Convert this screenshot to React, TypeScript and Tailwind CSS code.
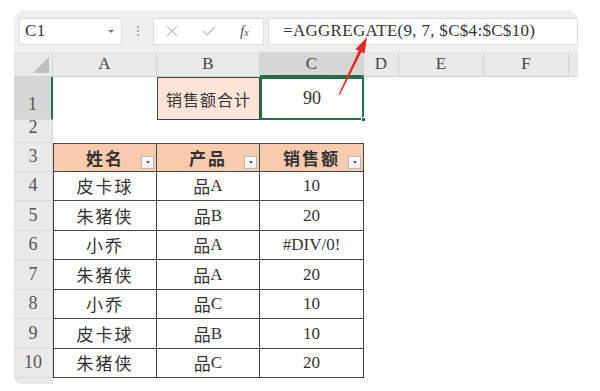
const serif = "font-['Liberation_Serif','Noto_Sans_CJK_SC',serif]";

const data = [
  ["皮卡球", "品A", "10"],
  ["朱猪侠", "品B", "20"],
  ["小乔", "品A", "#DIV/0!"],
  ["朱猪侠", "品A", "20"],
  ["小乔", "品C", "10"],
  ["皮卡球", "品B", "10"],
  ["朱猪侠", "品C", "20"],
];

const rowHeights = ["h-[29px]", "h-[30px]", "h-[29px]", "h-[30px]", "h-[29px]", "h-[30px]", "h-[29px]"];

function FilterBtn() {
  return (
    <div className="absolute right-[2px] bottom-[2px] w-[13px] h-[13px] bg-gradient-to-b from-white to-[#eeeeee] border border-[#b8b8b8] flex items-center justify-center">
      <div className="w-0 h-0 border-l-[2px] border-r-[2px] border-t-[3px] border-l-transparent border-r-transparent border-t-[#666]" />
    </div>
  );
}

function RowHead({ n, h, active }: { n: number; h: string; active?: boolean }) {
  return (
    <div
      className={`w-[39px] ${h} shrink-0 flex items-end justify-center pb-[1px] text-[18px] font-normal text-[#555] ${serif} border-r ${
        active ? "bg-[#d6d6d6] border-r-[2px] border-r-[#217346]" : "bg-[#e9e9e9] border-r-[#d4d4d4]"
      } border-b border-b-[#dadada]`}
    >
      {n}
    </div>
  );
}

export default function App() {
  return (
    <div className={`w-[600px] h-[391px] bg-white relative ${serif}`}>
      <div className="absolute left-[14px] top-[10px] w-[564px] rounded-t-[10px] rounded-bl-[8px] overflow-hidden bg-white">
        {/* toolbar */}
        <div className="h-[42px] bg-[#efefef] flex items-center pl-[5px]">
          <div className="w-[103px] h-[27px] bg-white border border-[#dcdcdc] flex items-center pl-[5px] pr-[7px] justify-between">
            <span className="text-[17px] text-[#333] tracking-[0.5px]">C1</span>
            <div className="w-0 h-0 border-l-[3px] border-r-[3px] border-t-[3px] border-l-transparent border-r-transparent border-t-[#777]" />
          </div>
          <div className="w-[31px] flex flex-col items-center gap-[2px]">
            <div className="w-[2px] h-[2px] bg-[#aaa]" />
            <div className="w-[2px] h-[2px] bg-[#aaa]" />
            <div className="w-[2px] h-[2px] bg-[#aaa]" />
          </div>
          <div className="w-[111px] h-[27px] bg-white border border-[#dcdcdc] flex items-center px-[11px] justify-between">
            <svg width="14" height="14" viewBox="0 0 14 14">
              <path d="M2 2 L12 12 M12 2 L2 12" stroke="#c4c4c4" strokeWidth="1.3" fill="none" />
            </svg>
            <svg width="16" height="14" viewBox="0 0 16 14">
              <path d="M2 7 L6 11 L14 3" stroke="#c4c4c4" strokeWidth="1.5" fill="none" />
            </svg>
            <span className="italic text-[15px] text-[#555] pr-[3px]">
              f<span className="text-[11px]">x</span>
            </span>
          </div>
          <div className="ml-[4px] flex-1 h-[27px] bg-white border border-[#dcdcdc] flex items-center pl-[14px]">
            <span className="text-[17px] text-[#333] tracking-[0.3px] whitespace-pre">=AGGREGATE(9, 7, $C$4:$C$10)</span>
          </div>
        </div>

        {/* column headers */}
        <div className="flex h-[25px] text-[17px] text-[#444]">
          <div className="w-[39px] bg-[#e9e9e9] border-r border-[#d4d4d4] border-b border-b-[#d0d0d0] flex items-end justify-end p-[3px]">
            <div className="w-0 h-0 border-l-[16px] border-b-[16px] border-l-transparent border-b-[#bdbdbd]" />
          </div>
          {[
            ["A", "w-[104px]"],
            ["B", "w-[103px]"],
            ["C", "w-[104px]"],
            ["D", "w-[35px]"],
            ["E", "w-[85px]"],
            ["F", "w-[85px]"],
            ["", "w-[9px]"],
          ].map(([l, w]) => (
            <div
              key={l + w}
              className={`${w} flex items-center justify-center border-r border-[#d4d4d4] border-b ${
                l === "C" ? "bg-[#d6d6d6] border-b-[#217346] border-b-[2px]" : "bg-[#e9e9e9] border-b-[#d0d0d0]"
              } ${l === "" ? "border-r-0" : ""}`}
            >
              {l}
            </div>
          ))}
        </div>

        {/* row 1 */}
        <div className="flex text-[17px] text-[#333]">
          <RowHead n={1} h="h-[43px]" active />
          <div className="w-[104px]" />
          <div className="w-[103px] h-[43px] bg-[#fce4d6] border border-[#444] flex items-center justify-center font-['Noto_Sans_CJK_SC',sans-serif] text-[16px] tracking-[1px]">
            销售额合计
          </div>
          <div className="w-[104px] h-[43px] border-[2px] border-[#217346] relative flex items-center justify-center text-[18px]">
            90
            <div className="absolute -right-[4px] -bottom-[4px] w-[5px] h-[5px] bg-[#217346] border border-white" />
          </div>
        </div>

        {/* row 2 */}
        <div className="flex">
          <RowHead n={2} h="h-[23px]" />
        </div>

        {/* row 3 headers */}
        <div className="flex text-[17px] text-[#333]">
          <RowHead n={3} h="h-[29px]" />
          {[
            ["姓名", "w-[104px] border-l"],
            ["产品", "w-[103px]"],
            ["销售额", "w-[104px]"],
          ].map(([t, w]) => (
            <div
              key={t}
              className={`${w} h-[29px] bg-[#f8cbad] border-t border-r border-b border-[#444] relative flex items-center justify-center tracking-[2px] font-semibold font-['Noto_Sans_CJK_SC',sans-serif]`}
            >
              {t}
              <FilterBtn />
            </div>
          ))}
        </div>

        {/* data rows */}
        {data.map((r, i) => (
          <div key={i} className="flex text-[17px] text-[#333]">
            <RowHead n={i + 4} h={rowHeights[i]} />
            <div className={`w-[104px] ${rowHeights[i]} border-l border-r border-b border-[#444] flex items-center justify-center font-['Noto_Sans_CJK_SC',sans-serif] tracking-[2px]`}>
              {r[0]}
            </div>
            <div className={`w-[103px] ${rowHeights[i]} border-r border-b border-[#444] flex items-center justify-center`}>
              <span className="font-['Noto_Sans_CJK_SC',sans-serif]">品</span>
              {r[1].slice(1)}
            </div>
            <div className={`w-[104px] ${rowHeights[i]} border-r border-b border-[#444] flex items-center justify-center`}>
              {r[2]}
            </div>
          </div>
        ))}

        {/* bottom strip */}
        <div className="w-[39px] h-[6px] bg-[#e9e9e9] rounded-bl-[8px]" />
      </div>

      {/* red arrow */}
      <svg className="absolute left-0 top-0 pointer-events-none" width="600" height="391">
        <polygon
          points="338.5,94.8 358.7,50.7 355.5,49.2 367,37 364.5,53.6 361.4,52.1 339.6,95.3"
          fill="#e8281e"
        />
      </svg>
    </div>
  );
}
